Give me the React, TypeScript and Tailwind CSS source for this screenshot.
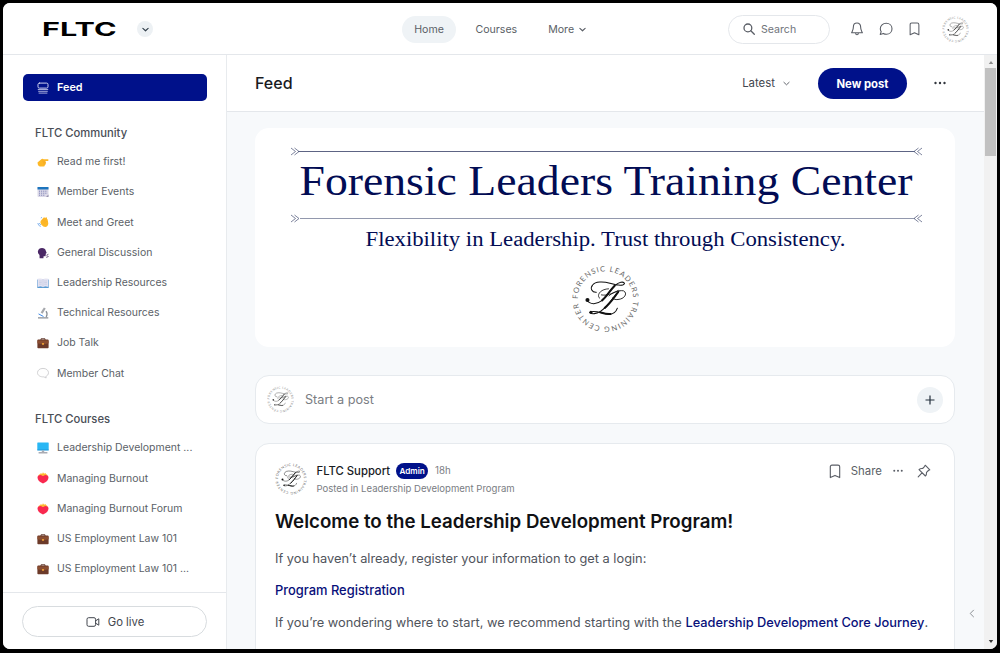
import React, { useId } from "react";
import { ReactNode } from "react";

function Seal({ className }: { className: string }) {
  const id = useId();
  return (
    <svg viewBox="0 0 200 200" className={className} role="img" aria-label="FLTC seal">
      <defs>
        <path id={id} d="M18.5 100a81.5 81.5 0 0 1 163 0a81.5 81.5 0 0 1 -163 0" />
      </defs>
      <text fontSize="22" fill="#6a6a6a" className="font-['Lato',sans-serif]">
        <textPath href={"#" + id} startOffset="0" textLength="498" lengthAdjust="spacing">
          FORENSIC LEADERS TRAINING CENTER
        </textPath>
      </text>
      <g fill="none" stroke="#111" strokeLinecap="round" strokeLinejoin="round">
        <path strokeWidth="3" d="M73 80C60 81 54 68 62 59C70 48 94 48 113 54C130 59 153 63 156 54C153 47 139 51 128 60C113 73 103 93 89 105C74 117 54 117 45 103" />
        <path strokeWidth="6" d="M127 61C113 75 104 92 90 104" />
        <path strokeWidth="2.4" d="M83 98C73 91 82 71 109 70M88 88C104 91 121 84 137 75" />
        <path strokeWidth="2.6" d="M110 91C116 83 139 73 153 76C165 82 158 98 140 101C131 103 123 101 120 97" />
        <path strokeWidth="3" d="M140 76C126 91 108 122 84 137C74 143 60 146 54 140C62 130 88 142 108 145C122 146 131 138 135 127" />
        <path strokeWidth="6" d="M137 80C126 94 114 113 98 126M84 139C94 142 106 146 115 144" />
      </g>
      <circle cx="47" cy="103" r="6" fill="#111" />
      <circle cx="57" cy="139" r="4.5" fill="#111" />
    </svg>
  );
}

function Chevron({ className, weight = 2 }: { className: string; weight?: number }) {
  return (
    <svg viewBox="0 0 12 12" className={className} fill="none" stroke="currentColor" strokeWidth={weight} strokeLinecap="round" strokeLinejoin="round">
      <path d="M1.5 4l4.5 4.2L10.5 4" />
    </svg>
  );
}

function Bookmark({ className }: { className: string }) {
  return (
    <svg viewBox="0 0 12 16" className={className} fill="none" stroke="currentColor" strokeWidth="1.2" strokeLinejoin="round">
      <path d="M1 14.5V3Q1 1.2 2.8 1.2H9.2Q11 1.2 11 3V14.5L6 12.2Z" />
    </svg>
  );
}

function Dots({ className }: { className: string }) {
  return (
    <svg viewBox="0 0 12 4" className={className} fill="currentColor">
      <circle cx="1.5" cy="2" r="1.2" />
      <circle cx="6" cy="2" r="1.2" />
      <circle cx="10.5" cy="2" r="1.2" />
    </svg>
  );
}

const glyphs: Record<string, ReactNode> = {
  point: (
    <>
      <path fill="#fdb827" d="M.5 6.5L4.6 3Q6 2.2 6.6 3.2L11.2 3.3Q12 4.2 11 5H8.4L8.8 6.2Q9.4 7 8.6 7.7Q8.8 8.7 7.9 9Q7.8 10.6 6.5 10.6H3.2Q.8 10.4 .5 6.5Z" />
      <path stroke="#eb9c25" strokeWidth=".4" fill="none" d="M5.4 5.2H8.4M6.2 6.5H8.7M6.2 7.8H8.5" />
    </>
  ),
  calendar: (
    <>
      <rect x=".5" y="1" width="11" height="10" rx="1" fill="#dcd9e8" />
      <path fill="#1c74bd" d="M.5 1h11v2.6H.5z" />
      <path stroke="#7d83b5" strokeWidth="1" strokeDasharray="1.1 1" d="M2 5.2h8.5M2 7.2h8.5M2 9.2h6" />
      <path fill="#9691ad" d="M11.5 8.6V11H9z" />
    </>
  ),
  wave: (
    <>
      <path fill="#fdb827" d="M3.6 5L6.7 1.4Q7.7.8 7.8 2L9.4 1.3Q10.2 1.5 10 2.9Q11 3 10.8 4.5L11.3 7.5Q11 10.9 8.2 11.1Q6.4 11 4.4 8.8Q2.9 6.6 3.6 5Z" />
      <path stroke="#f0a02c" strokeWidth=".4" fill="none" d="M5.3 5L7.5 2.5M6.4 6L9.3 3.2M7.2 7.2L10 5" />
      <path stroke="#87b5ec" strokeWidth="1" fill="none" d="M.8 7Q1.2 9.8 3.7 10.5M2.4 7Q2.6 8.4 4 9M5 1.4L3.8 2" />
    </>
  ),
  speaking: (
    <>
      <path fill="#4b2866" d="M1 4Q1.6.9 5 .9Q8.2.9 8.8 3.7L9.7 6L8.8 6.6L8.7 8.6Q8.3 9.5 6.6 9.2L6.4 11.2H2.6L2.5 8Q.4 6.4 1 4Z" />
      <path stroke="#68507b" strokeWidth=".9" fill="none" d="M9.6 8.2L11.4 7.3M9.6 9L11.6 9.5M9.2 9.8L10.4 11" />
    </>
  ),
  book: (
    <>
      <path fill="#2f82c8" d="M.3 2.6H11.7V10.8H.3z" />
      <path fill="#e4e3f2" d="M.6 1.8Q4.5 1 6 2.2Q7.5 1 11.4 1.8V9.9Q7.6 9.2 6 10.2Q4.4 9.2 .6 9.9z" />
      <path stroke="#b4bcdb" strokeWidth=".5" d="M2 4h2.8M2 5.6h2.8M2 7.2h2.8M7.2 4H10M7.2 5.6H10M7.2 7.2H10M6 2.2V10" />
    </>
  ),
  microscope: (
    <>
      <path stroke="#8b9097" strokeWidth="1.3" fill="none" d="M1 10.9h10.3M9 4.2Q11 6.8 9.2 10" />
      <path stroke="#a6a8ad" strokeWidth="2.2" fill="none" d="M7.8 1L4.6 6.2" />
      <path stroke="#3f8bea" strokeWidth="1" fill="none" d="M1.5 6.9L6.5 9.5" />
    </>
  ),
  briefcase: (
    <>
      <path stroke="#5f382d" strokeWidth="1" fill="none" d="M4 3V1.8h4V3" />
      <rect x=".4" y="2.6" width="11.2" height="8.6" rx=".8" fill="#6c3a29" />
      <path fill="#8b4e31" d="M.4 3.5H11.6V6.2L6 7.6L.4 6.2z" />
      <rect x="5.1" y="6" width="1.8" height="1.8" fill="#efa336" />
    </>
  ),
  chat: <path fill="#fefefe" stroke="#c3c3c6" strokeWidth=".75" d="M6 1.4C9.2 1.4 11.5 3.2 11.5 5.7C11.5 7.6 10.3 8.8 8.8 9.4L9.2 11L6.9 9.9C3.2 10.1.5 8.3.5 5.7C.5 3.2 2.8 1.4 6 1.4Z" />,
  monitor: (
    <>
      <rect x=".3" y=".6" width="11.4" height="7.6" rx=".5" fill="#29b7f4" />
      <path fill="#1c8fd4" d="M.3 7.6H11.7V8.4H.3z" />
      <path fill="#a9abb3" d="M4.8 8.4H7.2V10H10.4V11.4H1.6V10H4.8z" />
    </>
  ),
  heart: (
    <>
      <path fill="#f9294f" d="M6 11.6Q.6 9.4.5 5.6Q.8 2.8 3.4 2.8Q5.2 2.8 6 3.4Q6.8 2.8 8.6 2.8Q11.2 2.8 11.5 5.6Q11.4 9.4 6 11.6Z" />
      <path fill="#ffb72d" d="M1.4 3.8Q1.7 2 3.2 2.3L3.8.9L5.1 2L6 .2L7 1.8L8.6 1L8.9 2.3Q10.4 2 10.6 3.8Q9.2 2.8 7.7 3.2L6 3.9L4.3 3.2Q2.7 2.8 1.4 3.8Z" />
    </>
  ),
};

const community: [string, string][] = [
  ["point", "Read me first!"],
  ["calendar", "Member Events"],
  ["wave", "Meet and Greet"],
  ["speaking", "General Discussion"],
  ["book", "Leadership Resources"],
  ["microscope", "Technical Resources"],
  ["briefcase", "Job Talk"],
  ["chat", "Member Chat"],
];

const courses: [string, string][] = [
  ["monitor", "Leadership Development ..."],
  ["heart", "Managing Burnout"],
  ["heart", "Managing Burnout Forum"],
  ["briefcase", "US Employment Law 101"],
  ["briefcase", "US Employment Law 101 ..."],
];

function SpaceList({ items }: { items: [string, string][] }) {
  return (
    <ul>
      {items.map(([icon, label]) => (
        <li key={label} className="flex h-[30.2px] items-center pl-[34px] text-[10.48px] text-[#5b5f67]">
          <svg viewBox="0 0 12 12" className="mr-2 size-3 shrink-0">{glyphs[icon]}</svg>
          <span>{label}</span>
        </li>
      ))}
    </ul>
  );
}

function TopBar() {
  return (
    <header className="flex h-[52px] shrink-0 items-center border-b border-[#e4e7eb] bg-white pt-[1px] text-[10.6px] text-[#5b5f67]">
      <svg viewBox="0 0 80 24" className="ml-[36px] h-[24px] w-[80px]" aria-label="FLTC">
        <text x="3" y="18.9" fontSize="19" fontWeight="700" textLength="74.5" lengthAdjust="spacingAndGlyphs" className="font-['Inter',sans-serif]">FLTC</text>
      </svg>
      <button className="ml-[18px] flex size-4 items-center justify-center rounded-full bg-[#edf1f4] text-[#33404c]">
        <Chevron className="size-[7px]" />
      </button>
      <nav className="ml-[249px] flex w-[214px] items-center">
        <a className="flex h-[27px] w-[54px] items-center justify-center rounded-full bg-[#eff3f6] pt-px">Home</a>
        <a className="ml-[19.5px] pt-px">Courses</a>
        <a className="ml-[31px] pt-px">More</a>
        <Chevron className="ml-[5px] mt-[1px] size-[7px]" />
      </nav>
      <div className="ml-[112px] flex h-[29px] w-[102px] shrink-0 items-center rounded-full border border-[#e4e7eb] pl-[14px]">
        <svg viewBox="0 0 12 12" className="mr-[6px] size-3" fill="none" stroke="currentColor" strokeWidth="1.3" strokeLinecap="round">
          <circle cx="4.9" cy="4.9" r="3.9" />
          <path d="M7.8 7.8L11.3 11.3" />
        </svg>
        <span className="pt-px text-[#70747b]">Search</span>
      </div>
      <div className="flex items-center pl-[20px]">
        <svg viewBox="0 0 14 14" className="size-[14px]" fill="none" stroke="currentColor" strokeWidth="1.1" strokeLinejoin="round">
          <path d="M7 1C4.7 1 3.4 2.7 3.4 4.8C3.4 8.2 2.3 9.2 1.6 10.8H12.4C11.7 9.2 10.6 8.2 10.6 4.8C10.6 2.7 9.3 1 7 1ZM5.6 11Q5.7 12.8 7 12.8Q8.3 12.8 8.4 11" />
        </svg>
        <svg viewBox="0 0 14 14" className="ml-[14.5px] size-[14px]" fill="none" stroke="currentColor" strokeWidth="1.1" strokeLinejoin="round">
          <path d="M7.2 1.2C10.6 1.2 13 3.6 13 6.7C13 10 10.5 12.2 7.4 12.2C6 12.2 5 11.8 4.3 11.4L1.2 12.4L2.2 9.6C1.6 8.8 1.3 7.8 1.3 6.7C1.3 3.6 3.9 1.2 7.2 1.2Z" />
        </svg>
        <Bookmark className="ml-[16.5px] h-[14px] w-[11px]" />
        <Seal className="ml-[22px] size-[27px] opacity-80" />
      </div>
    </header>
  );
}

function Sidebar() {
  return (
    <aside className="flex w-[224px] shrink-0 flex-col border-r border-[#e8ebee] bg-white">
      <div className="flex-1 overflow-hidden pt-[19px]">
        <a className="ml-[19.5px] flex h-[27px] w-[184px] items-center rounded-[5px] bg-[#00118a] text-[10.8px] font-semibold text-white">
          <svg viewBox="0 0 12 12" className="ml-[14.5px] mr-[8px] size-3" fill="none" stroke="#cdd1ef" strokeLinecap="round">
            <rect x="1" y="1.1" width="10" height="5" rx="1.4" />
            <path d="M1.2 7.5h9.6M1.6 9.3h8.8M2 11.1h8" strokeWidth=".8" />
          </svg>
          <span className="pt-px">Feed</span>
        </a>
        <h2 className="ml-8 mt-[24px] text-[11.25px] leading-[16px] font-medium text-[#4a4e56]">FLTC Community</h2>
        <div className="mt-[6px]"><SpaceList items={community} /></div>
        <h2 className="ml-8 mt-[22px] text-[11.25px] leading-[16px] font-medium text-[#4a4e56]">FLTC Courses</h2>
        <div className="mt-[6.6px]"><SpaceList items={courses} /></div>
      </div>
      <div className="flex h-[57px] shrink-0 border-t border-[#e4e7eb] pl-[19px] pt-[13px]">
        <button className="flex h-[31px] w-[185px] items-center justify-center gap-2 rounded-full border border-[#d8dcdf] pl-px text-[11.3px] text-[#42464e]">
          <svg viewBox="0 0 14 12" className="h-3 w-[14px]" fill="none" stroke="currentColor" strokeWidth="1" strokeLinejoin="round">
            <rect x="1" y="1.7" width="8.6" height="8.6" rx="1.6" />
            <path d="M9.6 4.8L12.8 2.8V9.2L9.6 7.2" />
          </svg>
          <span className="pt-[2px]">Go live</span>
        </button>
      </div>
    </aside>
  );
}

function Banner() {
  return (
    <section className="h-[219px] w-[700px] shrink-0 overflow-hidden rounded-[14px] bg-white">
      <svg viewBox="255 128 700 219" className="h-[219px] w-[700px]">
        <g stroke="#5d6484" strokeWidth="1" fill="none">
          <path d="M298 151.5H915" />
          <path stroke="#9298ad" d="M300 218.5H915" />
          <path strokeWidth=".8" d="M291 148l4.5 3.5-4.5 3.5M294.5 148l4.5 3.5-4.5 3.5M922 148l-4.5 3.5 4.5 3.5M918.5 148l-4.5 3.5 4.5 3.5" />
          <path strokeWidth=".8" d="M291 215l4.5 3.5-4.5 3.5M294.5 215l4.5 3.5-4.5 3.5M922 215l-4.5 3.5 4.5 3.5M918.5 215l-4.5 3.5 4.5 3.5" />
        </g>
        <g fill="#020c54" className="font-['Liberation_Serif',serif]">
          <text x="299.5" y="194.5" fontSize="42" textLength="613" lengthAdjust="spacingAndGlyphs">Forensic Leaders Training Center</text>
          <text x="365.5" y="245.8" fontSize="20.5" textLength="480" lengthAdjust="spacingAndGlyphs">Flexibility in Leadership. Trust through Consistency.</text>
        </g>
        <svg x="571.5" y="265" width="68" height="68"><Seal className="" /></svg>
      </svg>
    </section>
  );
}

function Composer() {
  return (
    <section className="mt-[28px] flex h-[49px] w-[700px] shrink-0 items-center rounded-[14px] border border-[#e6eaee] bg-white pl-[11px] pr-[11px]">
      <Seal className="size-[27px] opacity-80" />
      <span className="ml-[11px] flex-1 pt-px text-[12.65px] text-[#7a7d83]">Start a post</span>
      <button className="flex size-[26px] items-center justify-center rounded-full bg-[#eff3f6]">
        <svg viewBox="0 0 10 10" className="size-[10px]" stroke="#24303c" strokeWidth="1.2"><path d="M5 .5v9M.5 5h9" /></svg>
      </button>
    </section>
  );
}

function Post() {
  return (
    <article className="mt-[19px] h-[240px] w-[700px] shrink-0 rounded-t-[14px] border border-[#e6eaee] bg-white pl-[19px] pr-[23.5px] pt-[18px] text-[12.8px] text-[#50545c]">
      <div className="flex">
        <Seal className="mt-[1px] size-[32px]" />
        <div className="ml-[9.5px] flex-1">
          <div className="flex h-[18px] items-center">
            <span className="pt-px text-[11.3px] font-medium text-[#191b1f]">FLTC Support</span>
            <span className="ml-[6px] flex h-4 w-8 items-center justify-center rounded-full bg-[#00118a] text-[8.2px] font-semibold text-white">Admin</span>
            <span className="ml-[7px] pt-px text-[9.7px] text-[#7a7d83]">18h</span>
          </div>
          <div className="pt-px text-[9.55px] leading-[16px] text-[#7a7d83]">Posted in Leadership Development Program</div>
        </div>
        <div className="flex h-[18px] items-center text-[11.4px] text-[#5b5f67]">
          <Bookmark className="h-[15px] w-[12px]" />
          <span className="ml-[10px] pt-[2px]">Share</span>
          <Dots className="ml-[11px] w-[10px]" />
          <svg viewBox="0 0 14 14" className="ml-[13.5px] size-[14px]" fill="none" stroke="currentColor" strokeWidth="1.1" strokeLinejoin="round" strokeLinecap="round">
            <path d="M8.2 1.2L12.8 5.8L11.4 6.5L9.5 8.4Q9.8 10.6 8.4 12L2 5.6Q3.4 4.2 5.6 4.5L7.5 2.6ZM5 8.9L1.2 12.8" />
          </svg>
        </div>
      </div>
      <h1 className="mt-[13px] text-[18.7px] leading-[24px] font-semibold whitespace-nowrap text-[#101114]">Welcome to the Leadership Development Program!</h1>
      <p className="mt-[15px] leading-[20px]">If you haven’t already, register your information to get a login:</p>
      <p className="mt-[12px] text-[12.9px] leading-[20px] font-medium text-[#08107a]">Program Registration</p>
      <p className="mt-[12px] leading-[20px] whitespace-nowrap">If you’re wondering where to start, we recommend starting with the <a className="font-medium text-[#08107a]">Leadership Development Core Journey</a>.</p>
    </article>
  );
}

export default function App() {
  return (
    <div className="h-[653px] w-[1000px] overflow-hidden bg-black px-[3px] pt-[3px] pb-[4px] font-['Inter',sans-serif]">
      <div className="flex h-[646px] w-[994px] flex-col overflow-hidden rounded-[7px] bg-white">
        <TopBar />
        <div className="flex min-h-0 flex-1">
          <Sidebar />
          <main className="flex min-w-0 flex-1 flex-col bg-[#f7f9fb]">
            <div className="flex h-[57px] shrink-0 items-center border-b border-[#e4e7eb] bg-white pl-[28px] text-[#191b1f]">
              <h1 className="flex-1 text-[16px] font-medium">Feed</h1>
              <span className="pt-px text-[11.4px] text-[#42464e]">Latest</span>
              <Chevron className="ml-[8px] size-[7px] text-[#42464e]" weight={1.4} />
              <button className="ml-[28px] h-[31px] w-[89px] rounded-full bg-[#00118a] pt-[2px] text-[11.3px] font-bold text-white">New post</button>
              <Dots className="ml-[27px] mr-[38px] w-[12px] text-[#33373e]" />
            </div>
            <div className="relative flex min-h-0 flex-1 flex-col overflow-hidden pl-[28px] pt-[16px]">
              <Banner />
              <Composer />
              <Post />
              <svg viewBox="0 0 6 10" className="absolute right-[9px] bottom-[31px] h-[9px] w-[6px]" fill="none" stroke="#8b8f94" strokeWidth="1.1"><path d="M5 1L1 5l4 4" /></svg>
            </div>
          </main>
          <div className="flex w-[13px] shrink-0 flex-col items-center bg-[#f1f1f1]">
            <svg viewBox="0 0 6 4" className="mt-[6px] h-[3px] w-[6px]" fill="#8c8c8c"><path d="M3 0L6 4H0z" /></svg>
            <div className="mt-[4px] h-[88px] w-[11px] bg-[#c1c1c1]" />
            <svg viewBox="0 0 6 4" className="mt-auto mb-[6px] h-[3px] w-[6px]" fill="#333"><path d="M3 4L6 0H0z" /></svg>
          </div>
        </div>
      </div>
    </div>
  );
}
